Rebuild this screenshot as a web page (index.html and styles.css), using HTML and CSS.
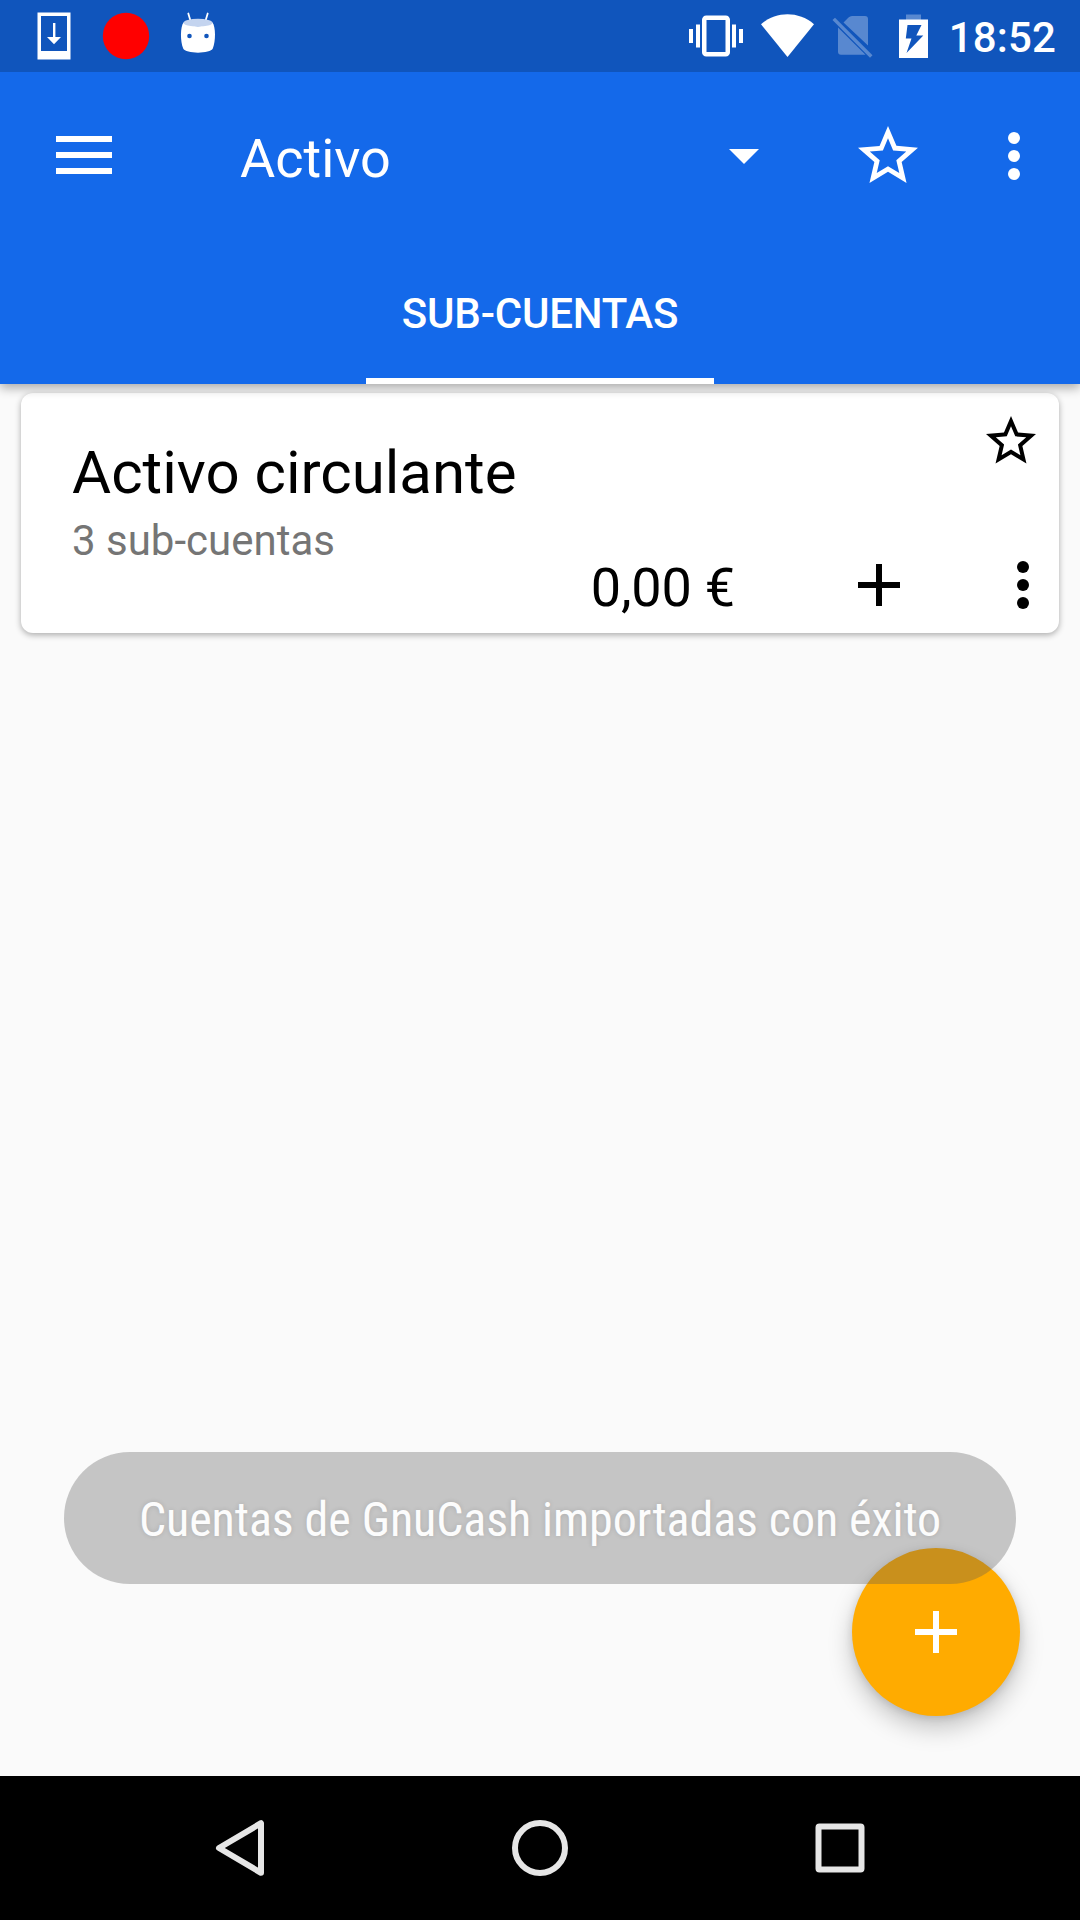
FILE: index.html
```html
<!DOCTYPE html>
<html lang="es">
<head>
<meta charset="utf-8">
<title>Activo</title>
<link rel="stylesheet" href="styles.css">
</head>
<body>
<div class="status-bar">
  <svg class="status-left" width="190" height="72" viewBox="30 0 190 72">
    <path fill="#fff" fill-rule="evenodd" d="M37.500 12.500h33v47h-33zM41 16v35h26V16z"/>
    <path fill="#fff" d="M53 23h2.400v14h5.600l-7 7.300-7-7.300h6z"/>
    <circle cx="126" cy="36" r="23.200" fill="#f00"/>
    <path d="M188.300 13.500l2.400 8M207.700 13.500l-2.400 8" stroke="#fff" stroke-width="1.800" stroke-linecap="round"/>
    <path fill="#fff" d="M183.500 22.500Q198 30 212.500 22.500C215.800 27 215.800 41 212.800 48.500C210.500 54 185.500 54 183.200 48.500C180.200 41 180.200 27 183.500 22.500z"/>
    <ellipse cx="198" cy="22.700" rx="14.500" ry="3.900" fill="#c4d4ef"/>
    <circle cx="189.500" cy="36" r="2.300" fill="#1055bc"/>
    <circle cx="206.500" cy="36" r="2.300" fill="#1055bc"/>
  </svg>
  <div class="status-right">
    <svg width="250" height="72" viewBox="685 0 250 72">
      <rect x="704.250" y="17.750" width="23.500" height="36.500" rx="2" fill="none" stroke="#fff" stroke-width="4.500"/>
      <path fill="#fff" d="M689 29h4v14h-4zM696 24.500h4v23h-4zM732 24.500h4v23h-4zM739 29h4v14h-4z"/>
      <path fill="#fff" d="M761 24.200C776.500 11 798.500 11 814 24.200L787.500 57z"/>
      <path fill="#fff" fill-opacity=".3" d="M843.500 22.500l5-5q1.500-1.500 3.500-1.500h13q3 0 3 3v26.500zM838 27.500l27.500 27.300h-24.500q-3 0-3-3zM832.500 20l2.500-2.200 37.500 37.500-2.500 2.500z"/>
      <path fill="#fff" fill-opacity=".3" d="M906 14.500h15v5.500h-15z"/>
      <path fill="#fff" fill-rule="evenodd" d="M899 19.500h29v38.500h-29zM907.500 25L905.800 38.500H911.500L906.500 53L923.300 35.500H916.300L921.500 25z"/>
    </svg>
    <span class="clock">18:52</span>
  </div>
</div>

<header class="app-bar">
  <div class="toolbar">
    <svg class="menu" width="56" height="38" viewBox="0 0 56 38"><path fill="#fff" d="M0 0h56v6H0zM0 16h56v6H0zM0 32h56v6H0z"/></svg>
    <div class="account-select">
      <span>Activo</span>
      <svg width="30" height="15" viewBox="0 0 30 15"><path fill="#fff" d="M0 0h30L15 15z"/></svg>
    </div>
    <svg class="bar-star" width="72" height="72" viewBox="0 0 24 24"><path fill="#fff" d="M22 9.240l-7.190-.620L12 2 9.190 8.630 2 9.240l5.460 4.730L5.820 21 12 17.270 18.180 21l-1.630-7.030L22 9.240zM12 15.400l-3.760 2.270 1-4.280-3.320-2.880 4.380-.380L12 6.100l1.710 4.040 4.380.380-3.320 2.880 1 4.280L12 15.400z"/></svg>
    <svg class="bar-more" width="72" height="72" viewBox="0 0 24 24"><g fill="#fff"><circle cx="12" cy="6" r="2"/><circle cx="12" cy="12" r="2"/><circle cx="12" cy="18" r="2"/></g></svg>
  </div>
  <nav class="tabs"><span class="tab">SUB-CUENTAS</span></nav>
</header>

<main class="content">
  <article class="card">
    <div class="info">
      <h2 class="name">Activo circulante</h2>
      <p class="detail">3 sub-cuentas</p>
    </div>
    <div class="side">
      <svg class="favorite" width="60" height="60" viewBox="0 0 24 24"><path d="M22 9.240l-7.190-.620L12 2 9.190 8.630 2 9.240l5.460 4.730L5.820 21 12 17.270 18.180 21l-1.630-7.030L22 9.240zM12 15.400l-3.760 2.270 1-4.280-3.320-2.880 4.380-.380L12 6.100l1.710 4.040 4.380.380-3.320 2.880 1 4.280L12 15.400z"/></svg>
      <div class="actions">
        <span class="amount">0,00 €</span>
        <svg class="add" width="72" height="72" viewBox="0 0 24 24"><path d="M19 13h-6v6h-2v-6H5v-2h6V5h2v6h6z"/></svg>
        <svg width="72" height="72" viewBox="0 0 24 24"><circle cx="12" cy="6" r="2"/><circle cx="12" cy="12" r="2"/><circle cx="12" cy="18" r="2"/></svg>
      </div>
    </div>
  </article>
</main>

<div class="fab"><svg width="72" height="72" viewBox="0 0 24 24"><path fill="#fff" d="M19 13h-6v6h-2v-6H5v-2h6V5h2v6h6z"/></svg></div>
<div class="toast"><span class="toast-text">Cuentas de GnuCash importadas con éxito</span></div>

<footer class="nav-bar">
  <svg width="60" height="60" viewBox="0 0 60 60"><path d="M51 5.200v49.600L9 30z"/></svg>
  <svg width="60" height="60" viewBox="0 0 60 60"><circle cx="30" cy="30" r="25"/></svg>
  <svg width="60" height="60" viewBox="0 0 60 60"><rect x="8.500" y="8.500" width="43" height="43" rx="1"/></svg>
</footer>
</body>
</html>
```
FILE: styles.css
```css
* { box-sizing: border-box; }
body {
  margin: 0;
  width: 1080px;
  height: 1920px;
  position: relative;
  overflow: hidden;
  display: flex;
  flex-direction: column;
  background: #fafafa;
  color: #000;
  font-family: Roboto, sans-serif;
}
svg { display: block; flex: none; }

.status-bar {
  height: 72px;
  flex: none;
  position: relative;
  z-index: 2;
  display: flex;
  justify-content: space-between;
  padding: 0 24px 0 30px;
  background: #1055bc;
}
.status-right { display: flex; align-items: center; gap: 14px; }
.clock {
  color: #fff;
  font-size: 42px;
  font-weight: 500;
  line-height: 50px;
  letter-spacing: .15px;
  padding-top: 3px;
}

.app-bar {
  height: 312px;
  flex: none;
  position: relative;
  z-index: 1;
  background: #1469ea;
  color: #fff;
  box-shadow: 0 4px 10px rgba(0, 0, 0, .32);
}
.toolbar {
  height: 168px;
  display: flex;
  align-items: center;
  padding: 0 30px 0 56px;
}
.menu { margin-top: -2px; }
.account-select {
  width: 519px;
  margin-left: 128px;
  display: flex;
  align-items: center;
  justify-content: space-between;
  font-size: 54px;
  line-height: 64px;
}
.account-select span { padding-top: 5px; }
.bar-star { margin-left: 93px; }
.bar-more { margin-left: auto; }
.tabs { height: 144px; display: flex; justify-content: center; }
.tab {
  width: 348px;
  padding: 49px 0 0;
  border-bottom: 6px solid #fff;
  text-align: center;
  white-space: nowrap;
  font-size: 42px;
  font-weight: 500;
  line-height: 50px;
  letter-spacing: -.2px;
}

.content { flex: 1; padding: 9px 21px; }
.card {
  height: 240px;
  display: flex;
  justify-content: space-between;
  background: #fff;
  border-radius: 12px;
  box-shadow: 0 2px 6px rgba(0, 0, 0, .32);
}
.info { padding: 45px 0 0 51px; }
.name { margin: 0; font-size: 60px; font-weight: 400; line-height: 70px; }
.detail { margin: 8px 0 0; font-size: 42px; line-height: 50px; color: #757575; }
.side {
  display: flex;
  flex-direction: column;
  justify-content: space-between;
  align-items: flex-end;
  padding: 18px 0 12px;
}
.favorite { margin-right: 18px; }
.actions { display: flex; align-items: center; }
.amount {
  font-size: 54px;
  line-height: 64px;
  letter-spacing: -.2px;
  padding-top: 5px;
  margin-right: 108px;
}
.add { margin-right: 72px; }

.fab {
  position: absolute;
  left: 852px;
  top: 1548px;
  width: 168px;
  height: 168px;
  border-radius: 50%;
  display: flex;
  align-items: center;
  justify-content: center;
  background: #ffab00;
  box-shadow: 0 12px 24px rgba(0, 0, 0, .22), 0 2px 8px rgba(0, 0, 0, .12);
}
.toast {
  position: absolute;
  left: 64px;
  top: 1452px;
  width: 952px;
  height: 132px;
  border-radius: 66px;
  display: flex;
  align-items: center;
  justify-content: center;
  background: rgba(88, 88, 88, .32);
}
.toast-text {
  padding-top: 3px;
  color: #fcfcfc;
  font-family: "Roboto Condensed", Roboto, sans-serif;
  font-stretch: 75%;
  font-size: 48px;
  line-height: 56px;
  letter-spacing: -.08px;
  white-space: nowrap;
  text-shadow: 0 0 5px rgba(0, 0, 0, .13);
}

.nav-bar {
  height: 144px;
  flex: none;
  display: flex;
  align-items: center;
  justify-content: center;
  gap: 240px;
  background: #000;
}
.nav-bar svg { fill: none; stroke: #e6e6e6; stroke-width: 6; stroke-linejoin: round; }
```
